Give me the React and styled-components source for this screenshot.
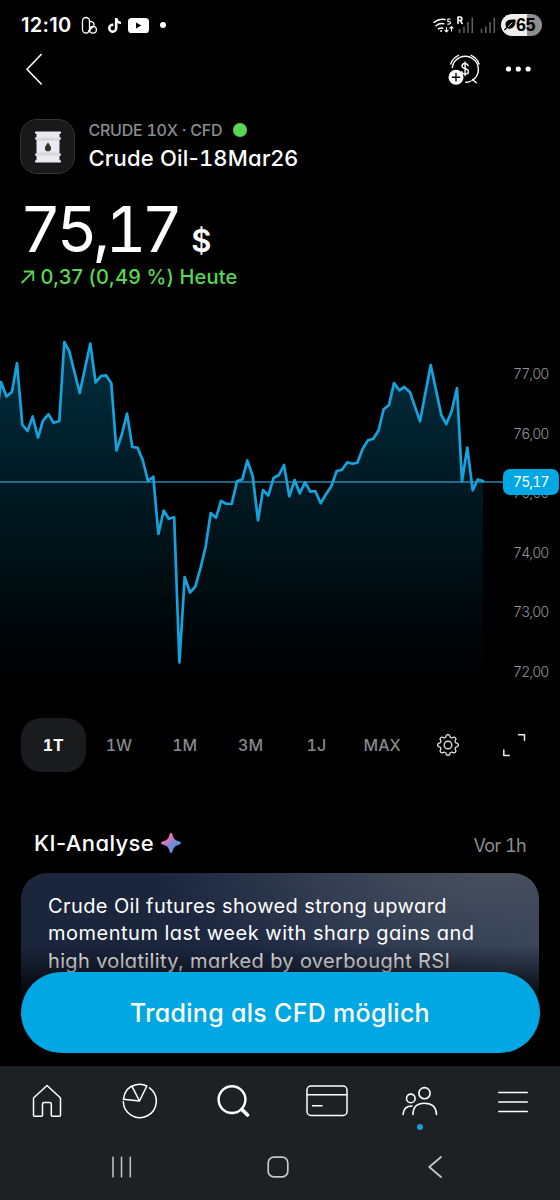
import React from 'react';
import styled, { createGlobalStyle } from 'styled-components';
import { FaTiktok } from 'react-icons/fa6';
import { BsGear } from 'react-icons/bs';

const GlobalStyle = createGlobalStyle`
  body {
    margin: 0;
    background: #000;
  }

  * {
    box-sizing: border-box;
  }
`;

const Screen = styled.div`
  width: 560px;
  height: 1200px;
  display: flex;
  flex-direction: column;
  overflow: hidden;
  background: #000;
  color: #fff;
  font-family: Inter, 'Open Sans', sans-serif;
  font-feature-settings: 'cv11';
`;

const Svg = styled.svg`
  display: block;
  flex: none;
  fill: none;
  stroke: ${props => props.$color || '#fff'};
  stroke-width: ${props => props.$weight || 1.5};
  stroke-linecap: round;
  stroke-linejoin: round;
`;

const StatusBar = styled.div`
  height: 50px;
  flex: none;
  display: flex;
  align-items: center;
  justify-content: space-between;
  padding: 0 18px 0 21px;
`;

const StatusGroup = styled.div`
  display: flex;
  align-items: center;
`;

const Clock = styled.div`
  width: 60px;
  font-size: 20px;
  font-weight: 600;
  letter-spacing: 0.3px;
`;

const TikTok = styled(FaTiktok)`
  width: 13px;
  height: 15px;
  margin: 0 7px 0 10px;
`;

const StatusDot = styled.div`
  width: 6px;
  height: 6px;
  margin-left: 11px;
  border-radius: 50%;
  background: #fff;
`;

const Battery = styled.div`
  width: 41px;
  height: 22px;
  display: flex;
  align-items: center;
  padding-left: 3px;
  border-radius: 11px;
  background: linear-gradient(90deg, #eee 0 26px, #8e8e8e 26px);
  color: #000;
  font-family: 'Liberation Sans', sans-serif;
  font-size: 18px;
  font-weight: 700;
  letter-spacing: -0.5px;
`;

const TopBar = styled.div`
  height: 38px;
  flex: none;
  display: flex;
  align-items: center;
  justify-content: space-between;
  padding: 0 28px 0 24px;
`;

const TopActions = styled.div`
  display: flex;
  align-items: center;
  gap: 24px;
`;

const Instrument = styled.div`
  display: flex;
  flex: none;
  height: 55px;
  margin: 31px 0 0 20px;
`;

const Logo = styled.div`
  width: 55px;
  height: 55px;
  display: flex;
  align-items: center;
  justify-content: center;
  margin-right: 13.5px;
  border: 1px solid #343536;
  border-radius: 17px;
  background: #19191a;
`;

const Ticker = styled.div`
  display: flex;
  align-items: center;
  height: 22px;
  font-size: 16px;
  font-weight: 550;
  letter-spacing: -0.25px;
  color: #8b8d90;
  font-feature-settings: 'cv11', 'tnum';
`;

const OpenDot = styled.div`
  width: 14px;
  height: 14px;
  margin-left: 11px;
  border-radius: 50%;
  background: #58d852;
`;

const Name = styled.div`
  margin-top: 2px;
  line-height: 30px;
  font-size: 22px;
  font-weight: 550;
  letter-spacing: 0.2px;
`;

const Tabular = styled.span`
  font-feature-settings: 'tnum';
`;

const Price = styled.div`
  flex: none;
  margin: 20px 0 0 20px;
  height: 70px;
  line-height: 69px;
  font-size: 63.5px;
  letter-spacing: -4.7px;
  font-feature-settings: 'tnum';
`;

const Currency = styled.span`
  margin-left: 13px;
  font-size: 31px;
  font-weight: 600;
  letter-spacing: 0;
  font-feature-settings: normal;
`;

const Change = styled.div`
  display: flex;
  flex: none;
  align-items: center;
  gap: 6px;
  height: 26px;
  padding-left: 20.5px;
  color: #58d852;
  font-size: 20px;
  font-weight: 550;
  letter-spacing: 0.17px;
`;

const ChartArea = styled.div`
  position: relative;
  display: flex;
  flex: none;
  height: 370px;
  margin-top: 30px;
`;

const Axis = styled.div`
  width: 57px;
  padding: 24px 0 0 10px;
`;

const Tick = styled.div`
  height: 59.5px;
  line-height: 59.5px;
  font-size: 14px;
  font-weight: 300;
  letter-spacing: -0.9px;
  font-feature-settings: 'tnum';
  color: #939497;
`;

const PriceTag = styled.div`
  position: absolute;
  right: 1px;
  top: 149px;
  width: 56px;
  height: 26px;
  line-height: 26px;
  border-radius: 7px;
  background: #00a7e3;
  padding-left: 10px;
  font-size: 14px;
  letter-spacing: -0.9px;
  font-feature-settings: 'tnum';
`;

const Periods = styled.div`
  display: flex;
  flex: none;
  height: 54px;
  margin: 28px 0 0 20.5px;
`;

const Period = styled.div`
  width: 65.8px;
  display: flex;
  align-items: center;
  justify-content: center;
  padding: 0 0.5px 1px 0;
  border-radius: 20px;
  font-size: 16px;
  font-feature-settings: 'tnum';
  font-weight: ${props => (props.$active ? 700 : 500)};
  color: ${props => (props.$active ? '#fff' : '#87898c')};
  background: ${props => (props.$active ? '#1a1b1d' : 'transparent')};
`;

const Gear = styled(BsGear)`
  width: 22px;
  height: 22px;
  color: #ddd;
`;

const SectionHead = styled.div`
  display: flex;
  flex: none;
  align-items: center;
  height: 39px;
  margin: 51px 34px 11px;
`;

const SectionTitle = styled.div`
  font-size: 22px;
  font-weight: 550;
  letter-spacing: 0.4px;
  margin-right: 6px;
`;

const Age = styled.div`
  margin: 5px 0 0 auto;
  font-size: 18px;
  letter-spacing: -0.6px;
  color: #8b8d90;
  font-feature-settings: 'tnum';
`;

const CardArea = styled.div`
  position: relative;
  flex: 1;
  padding: 0 21px;
  overflow: hidden;
`;

const Card = styled.div`
  height: 240px;
  padding: 20px 27px;
  border-radius: 26px;
  background:
    radial-gradient(ellipse 340px 110px at 92% 0, #474e5b, rgba(71, 78, 91, 0)),
    linear-gradient(100deg, #1b253c 20%, #1e2942 45%, #34415c 95%);
`;

const CardLine = styled.div`
  line-height: 27.4px;
  white-space: nowrap;
  font-size: 20px;
  letter-spacing: ${props => props.$spacing}px;
`;

// Darkens the card towards the floating button.
const Fade = styled.div`
  position: absolute;
  left: 0;
  right: 0;
  top: 72px;
  bottom: 0;
  display: flex;
  align-items: flex-end;
  padding: 0 20.5px 13px;
  background: linear-gradient(180deg, rgba(0, 0, 0, 0), rgba(0, 0, 0, 0.35) 22px, #000 58px);
`;

const CtaButton = styled.div`
  width: 100%;
  height: 81px;
  line-height: 82px;
  border-radius: 41px;
  background: #00a7e3;
  text-align: center;
  font-size: 25px;
  font-weight: 550;
  letter-spacing: 0.3px;
`;

const Footer = styled.div`
  flex: none;
  height: 134px;
  background: #1e2124;
`;

const TabBar = styled.div`
  display: grid;
  grid-template-columns: repeat(6, 1fr);
  height: 70px;
`;

const Tab = styled.div`
  position: relative;
  display: flex;
  align-items: center;
  justify-content: center;
`;

const Badge = styled.div`
  position: absolute;
  left: 44px;
  top: 58px;
  width: 6px;
  height: 6px;
  border-radius: 50%;
  background: #0fa3dc;
`;

const SystemNav = styled.div`
  display: grid;
  grid-template-columns: repeat(3, 1fr);
  align-items: center;
  justify-items: center;
  height: 62px;
  padding: 0 47px 0 44px;
`;

const points = [
  [-1, 398], [1, 382], [6.5, 396.5], [12, 391.7], [17, 363], [22.3, 424.7], [27.5, 431],
  [32.7, 416.5], [38, 437.5], [43, 420.7], [48.4, 414.3], [53.7, 422.7], [59.3, 421],
  [64.3, 342], [69.3, 351.3], [79.7, 393], [90.3, 343.5], [95.6, 382.5], [101, 376],
  [106, 375.3], [111.3, 383.3], [116.4, 450.5], [121.7, 435], [127, 413.5], [132.3, 447],
  [137.6, 447.7], [142.7, 460], [148, 481], [153.3, 476.7], [158.4, 534], [163.7, 510.5],
  [168.8, 518.7], [174.2, 517.3], [179.4, 662.5], [184.7, 577], [190, 592.5], [195.3, 586.7],
  [200.5, 568], [205.6, 547], [210.7, 513], [216, 517.7], [221, 501], [226.3, 503.7],
  [231.7, 504], [237, 481.3], [242.3, 479.3], [247.3, 460.5], [252.7, 476], [258, 520.3],
  [263, 490], [268.3, 495.5], [273.7, 477.7], [278.7, 475.3], [284, 465], [289.3, 496.3],
  [294.7, 480], [299.7, 493.3], [305, 482.3], [310.3, 491.7], [315.3, 491], [320.7, 503.2],
  [326, 494.3], [331.3, 486.3], [336.7, 471], [341.7, 470], [347.3, 462.3], [352.3, 463.7],
  [357.3, 462.7], [362.7, 448.7], [368, 440.3], [373.3, 438.7], [378.5, 430.5], [383.7, 409.3],
  [389, 405], [394, 383], [399.3, 390.3], [404.3, 387], [410, 392.3], [420, 421.3],
  [430.7, 365], [441.3, 415], [446.3, 424], [451.7, 411], [457, 388], [462, 481.3],
  [467.3, 447.5], [472.7, 490.3], [477.7, 479.5], [483, 481],
];

const line = points.map(p => p.join(',')).join(' ');

const Chart = () => (
  <Svg width="503" height="370" viewBox="0 320 503 370">
    <defs>
      <linearGradient id="area" gradientUnits="userSpaceOnUse" x1="0" y1="342" x2="0" y2="680">
        <stop offset="0" stopColor="#00a7e3" stopOpacity="0.28" />
        <stop offset="0.4" stopColor="#00a7e3" stopOpacity="0.16" />
        <stop offset="1" stopColor="#00a7e3" stopOpacity="0" />
      </linearGradient>
    </defs>
    <polygon points={`-1,690 ${line} 483,690`} fill="url(#area)" stroke="none" />
    <path d="M0 482H503" stroke="#2c86b0" strokeWidth="1.6" />
    <polyline points={line} stroke="#14a3dd" strokeWidth="2.7" />
  </Svg>
);

const periods = ['1T', '1W', '1M', '3M', '1J', 'MAX'];
const ticks = ['77,00', '76,00', '75,00', '74,00', '73,00', '72,00'];

export default () => {
  return (
    <Screen>
      <GlobalStyle />

      <StatusBar>
        <StatusGroup>
          <Clock>12:10</Clock>
          <Svg width="17" height="19" viewBox="0 0 17 19" $weight={1.3}>
            <rect x="1.5" y="1.5" width="7" height="15.5" rx="3.5" />
            <path d="M8.5 5.3c3 0 4.6 1.7 4.6 3.4 0 1.5-1 2.5-2.2 3.2L7.5 15" />
            <circle cx="12" cy="13.7" r="3.4" />
          </Svg>
          <TikTok />
          <Svg width="21" height="15" viewBox="0 0 21 15">
            <rect width="21" height="15" rx="3.6" fill="#fff" stroke="none" />
            <path d="M8 4.6v5.8l5.3-2.9z" fill="#000" stroke="none" />
          </Svg>
          <StatusDot />
        </StatusGroup>

        <StatusGroup>
          <Svg width="70" height="22" viewBox="431 14 70 22" $weight={1.5}>
            <path d="M434 22.3q5-4 11-2.700M436 25.800q3.500-3 7.800-2M438.500 28.900q2-1.600 4.300-.6" />
            <circle cx="441.2" cy="31" r="1" fill="#fff" stroke="none" />
            <path d="M450.2 19h-2.300v2.600q2.700-.4 2.600 1.300-.2 1.500-2.700 1.200" strokeWidth="1.2" />
            <path d="M446.5 27.500v4.300m-1.500-1.400l1.500 1.500 1.500-1.500M451.500 31v-4.300m-1.500 1.400l1.500-1.500 1.500 1.500" strokeWidth="1.2" />
            <path d="M458 23.5V17h2.200q1.700 0 1.700 1.700t-1.700 1.700H458m2.300 0l1.800 3.100" strokeWidth="1.6" />
            <g stroke="#5c5c5c" strokeWidth="1.6" strokeLinecap="butt">
              <path d="M459.5 33v-4M464 33v-6.500M468 33V22M472.300 33V17.500" />
              <path d="M481.5 33v-4M485.800 33v-6.500M490 33V22M494.300 33V17.500" />
            </g>
          </Svg>
          <Battery>
            <Svg width="12" height="12" viewBox="0 0 12 12" $color="#000" $weight={1.3}>
              <path d="M11 1.2Q3 .5 2.2 4.5 1.8 7.5 4 8.8 8 9.8 10 6.5 11 4.5 11 1.2z" fill="#000" />
              <path d="M.8 10.5l3-2.5" />
              <path d="M4 7.8L8 4" stroke="#eee" strokeWidth="0.9" />
            </Svg>
            65
          </Battery>
        </StatusGroup>
      </StatusBar>

      <TopBar>
        <Svg width="20" height="32" viewBox="0 0 20 32" $weight={1.6}>
          <path d="M17.2 1.5L3 16.2 17.2 31" />
        </Svg>
        <TopActions>
          <Svg width="34" height="32" viewBox="447 53 34 32" $weight={1.4}>
            <path d="M452.3 67.5a13.1 13.1 0 1 1 19.6 13.2M470.2 81.3a13 13 0 0 1-4.500 1" />
            <path d="M450.7 64q2-6 7.8-8.700M471.2 55.300q5.8 2.700 7.8 8.700M472.7 79.500l3.5 3.300" />
            <path d="M468.2 65.5q-.6-2-3.200-2-2.900 0-2.900 2.500 0 2 3 2.600 3.300.6 3.300 2.900 0 2.600-3.300 2.600-2.800 0-3.300-2.400M465.1 62v13.5" />
            <circle cx="456" cy="77.2" r="7.5" fill="#fff" stroke="none" />
            <path d="M452.3 77.2h7.400M456 73.500v7.400" stroke="#000" />
          </Svg>
          <Svg width="27" height="6" viewBox="0 0 27 6">
            <g fill="#fff" stroke="none">
              <circle cx="3.5" cy="3" r="2.6" />
              <circle cx="13.3" cy="3" r="2.6" />
              <circle cx="23.1" cy="3" r="2.6" />
            </g>
          </Svg>
        </TopActions>
      </TopBar>

      <Instrument>
        <Logo>
          <Svg width="28" height="32" viewBox="0 0 28 32">
            <g fill="#e9e9ee" stroke="none">
              <rect x="2.5" y="1.5" width="23" height="29" />
              <rect x="1" y="0.5" width="26" height="2.2" rx="0.6" />
              <rect x="1" y="6.3" width="26" height="2.2" rx="0.6" fill="#dcdce2" />
              <rect x="1" y="22.5" width="26" height="2.2" rx="0.6" fill="#dcdce2" />
              <rect x="1" y="29.2" width="26" height="2.2" rx="0.6" />
            </g>
            <path d="M2.5 8.9h23M2.5 22.2h23" stroke="#bdbdc6" strokeWidth="0.7" />
            <path d="M14 11.5c1.5 2.3 3.1 3.8 3.1 5.7a3.1 3.1 0 0 1-6.2 0c0-1.900 1.600-3.400 3.100-5.700z" fill="#333" stroke="none" />
          </Svg>
        </Logo>
        <div>
          <Ticker>
            CRUDE 10X · CFD
            <OpenDot />
          </Ticker>
          <Name>
            Crude Oil-<Tabular>18</Tabular>Mar26
          </Name>
        </div>
      </Instrument>

      <Price>
        75,17
        <Currency>$</Currency>
      </Price>
      <Change>
        <Svg width="14" height="14" viewBox="0 0 14 14" $color="#58d852" $weight={1.8}>
          <path d="M1.2 12.5L12 1.7M3.5 1.5H12.3V10.3" />
        </Svg>
        0,37 (0,49 %) Heute
      </Change>

      <ChartArea>
        <Chart />
        <Axis>
          {ticks.map(tick => (
            <Tick key={tick}>{tick}</Tick>
          ))}
        </Axis>
        <PriceTag>75,17</PriceTag>
      </ChartArea>

      <Periods>
        {periods.map((period, i) => (
          <Period key={period} $active={i === 0}>{period}</Period>
        ))}
        <Period>
          <Gear />
        </Period>
        <Period>
          <Svg width="24" height="24" viewBox="0 0 24 24" $color="#eee">
            <path d="M16.5 1.8h6v5.5M1.8 17v5.5h5.5" />
          </Svg>
        </Period>
      </Periods>

      <SectionHead>
        <SectionTitle>KI-Analyse</SectionTitle>
        <Svg width="22" height="22" viewBox="0 0 22 22">
          <defs>
            <linearGradient id="spark" x1="0.2" y1="0.2" x2="0.75" y2="0.8">
              <stop offset="0.1" stopColor="#ff6fb5" />
              <stop offset="0.6" stopColor="#7a86d8" />
              <stop offset="1" stopColor="#5a9ae0" />
            </linearGradient>
          </defs>
          <path d="M11 1Q12.2 1 12.7 3.2 13.7 8.3 18.8 9.3 21 9.8 21 11T18.8 12.7Q13.7 13.7 12.7 18.8 12.2 21 11 21T9.3 18.8Q8.3 13.7 3.2 12.7 1 12.2 1 11T3.2 9.3Q8.3 8.3 9.3 3.2 9.8 1 11 1z" fill="url(#spark)" stroke="none" />
        </Svg>
        <Age>Vor 1h</Age>
      </SectionHead>

      <CardArea>
        <Card>
          <CardLine $spacing={0.4}>Crude Oil futures showed strong upward</CardLine>
          <CardLine $spacing={0.5}>momentum last week with sharp gains and</CardLine>
          <CardLine $spacing={0.35}>high volatility, marked by overbought RSI</CardLine>
        </Card>
        <Fade>
          <CtaButton>Trading als CFD möglich</CtaButton>
        </Fade>
      </CardArea>

      <Footer>
        <TabBar>
          <Tab>
            <Svg width="30" height="34" viewBox="0 0 30 34">
              <path d="M1.5 14L15 1.5 28.5 14V31.3a1 1 0 0 1-1 1H20.3a1 1 0 0 1-1-1V20a1.5 1.5 0 0 0-1.5-1.5H12A1.5 1.5 0 0 0 10.5 20V31.3a1 1 0 0 1-1 1H2.5a1 1 0 0 1-1-1z" />
            </Svg>
          </Tab>
          <Tab>
            <Svg width="36" height="36" viewBox="0 0 36 36">
              <path d="M1.3 18.5A16.5 16.5 0 1 0 27.5 4.8" />
              <path d="M17.5 18L1.4 16.3Q2.7 4 14 1.7 20 .6 24.8 3zM17.5 18L10.3 3.8" />
            </Svg>
          </Tab>
          <Tab>
            <Svg width="34" height="34" viewBox="0 0 34 34" $weight={2.4}>
              <circle cx="16" cy="15.6" r="13.4" />
              <path d="M25.7 25.3l5.8 5.8" strokeWidth="3.6" />
            </Svg>
          </Tab>
          <Tab>
            <Svg width="42" height="32" viewBox="0 0 42 32">
              <rect x="1" y="1" width="40" height="29.5" rx="4" />
              <path d="M1 9.8h40M6.5 20.7h9.5" />
            </Svg>
          </Tab>
          <Tab>
            <Svg width="36" height="30" viewBox="0 0 36 30" $weight={1.6}>
              <circle cx="22.5" cy="7.2" r="5.6" />
              <circle cx="8.8" cy="12.4" r="4.3" />
              <path d="M11 28.5q0-11.2 11.5-11.2T34.5 28.5M1 28.5q.6-8.5 9-8.5" />
            </Svg>
            <Badge />
          </Tab>
          <Tab>
            <Svg width="30" height="24" viewBox="0 0 30 24">
              <path d="M.8 3.5h28.5M.8 13h28.5M.8 22.5h28.5" />
            </Svg>
          </Tab>
        </TabBar>
        <SystemNav>
          <Svg width="20" height="22" viewBox="0 0 20 22" $color="#c6c8c9">
            <path d="M1 1.2v19.6M9.5 1.2v19.6M18.3 1.2v19.6" />
          </Svg>
          <Svg width="22" height="22" viewBox="0 0 22 22" $color="#c6c8c9" $weight={1.7}>
            <rect x="1.2" y="1.2" width="19.6" height="19.6" rx="5.5" />
          </Svg>
          <Svg width="14" height="22" viewBox="0 0 14 22" $color="#c6c8c9" $weight={1.7}>
            <path d="M13 1L1.3 11 13 21" />
          </Svg>
        </SystemNav>
      </Footer>
    </Screen>
  );
};
